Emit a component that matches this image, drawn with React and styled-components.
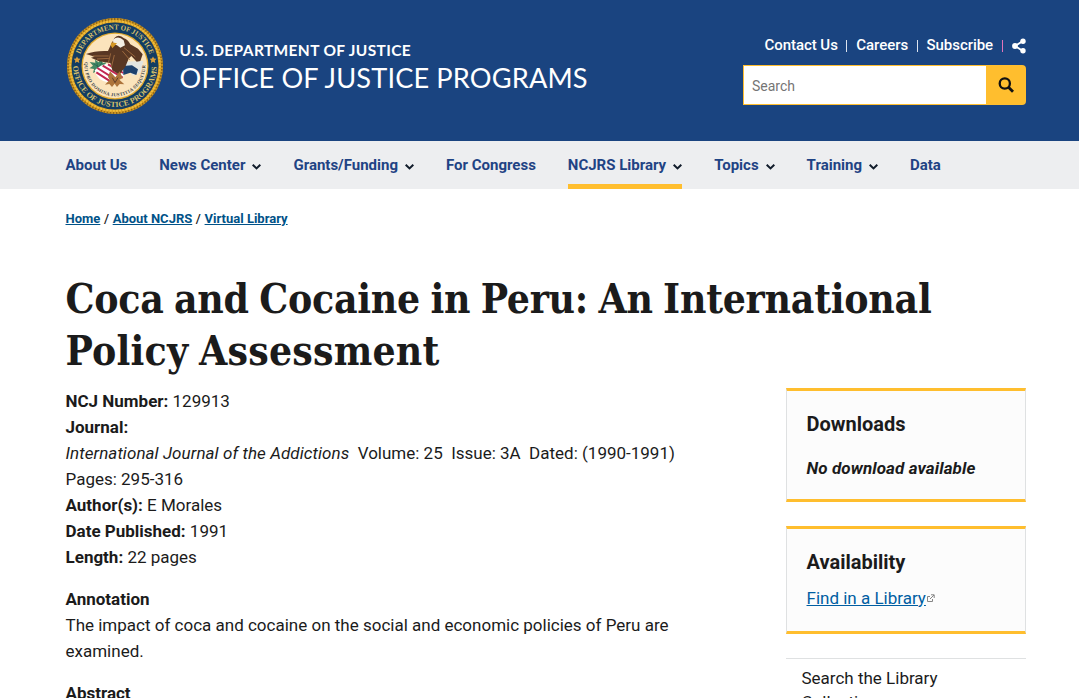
import React from 'react';
import styled, { createGlobalStyle, css } from 'styled-components';

const GlobalStyle = createGlobalStyle`
  * { box-sizing: border-box; }
  html, body { margin: 0; height: 698px; overflow: hidden; background: #fff; }
  body { font-family: Roboto, "Liberation Sans", sans-serif; color: #1b1b1b; }
  h1, h2, p, ul { margin: 0; padding: 0; }
`;

const Container = styled.div`
  width: 960px;
  margin-left: 65.5px;
`;

const Header = styled.header`
  height: 141px;
  background: #1a4480;
`;

const HeaderInner = styled(Container)`
  display: flex;
  justify-content: space-between;
`;

const Brand = styled.div`
  display: flex;
  padding-top: 17px;
  color: #fff;
`;

const Seal = styled.svg`
  width: 98px;
  height: 98px;
  display: block;
`;

const BrandText = styled.div`
  padding: 23px 0 0 16px;
  font-family: Lato, "Liberation Sans", sans-serif;
  white-space: nowrap;
`;

const Department = styled.div`
  font-size: 15.5px;
  font-weight: 700;
  line-height: 20px;
  letter-spacing: 0.36px;
`;

const Office = styled.div`
  font-size: 27.2px;
  line-height: 36px;
  letter-spacing: 0.14px;
`;

const Utility = styled.div`
  width: 283px;
  padding-top: 35px;
`;

const UtilityLinks = styled.div`
  display: flex;
  justify-content: flex-end;
  align-items: center;
  height: 20px;
  color: #fff;
  font-size: 15px;
  font-weight: 500;
  letter-spacing: -0.04px;
  white-space: nowrap;
`;

const Divider = styled.span`
  width: 1px;
  height: 12px;
  margin: 2px 8.8px 0 8.6px;
  background: ${({ $color }) => $color || '#dce4ef'};
`;

const ShareIcon = styled.svg`
  width: 14px;
  height: 16px;
  margin-top: 2px;
`;

const SearchForm = styled.div`
  display: flex;
  height: 40px;
  margin-top: 10px;
`;

const SearchInput = styled.div`
  flex: 1;
  padding-left: 8.5px;
  border: 1px solid #ffbe2e;
  border-right: 0;
  background: #fff;
  color: #757575;
  font-size: 14px;
  line-height: 41px;
`;

const SearchButton = styled.div`
  width: 40px;
  display: flex;
  align-items: center;
  justify-content: center;
  border-radius: 0 4px 4px 0;
  background: #ffbe2e;
`;

const Nav = styled.nav`
  height: 48px;
  background: #edeef0;
`;

const NavList = styled(Container)`
  display: flex;
  gap: 32px;
`;

const NavItem = styled.div`
  display: flex;
  align-items: center;
  height: 48px;
  color: #1f4384;
  font-size: 15px;
  font-weight: 700;
  white-space: nowrap;
  ${({ $active }) => $active && css`box-shadow: inset 0 -5px #ffbe2e;`}
`;

const Chevron = styled.svg`
  width: 9px;
  height: 6px;
  margin: 3px 0 0 7px;
`;

const Breadcrumbs = styled(Container)`
  padding-top: 22px;
  font-size: 13px;
  font-weight: 500;
  line-height: 16px;
  word-spacing: 0.4px;
`;

const CrumbLink = styled.a`
  color: #005288;
  font-weight: 700;
  text-decoration: underline;
  word-spacing: 0;
`;

const Title = styled.h1`
  margin-top: 46px;
  font-family: "DejaVu Serif Condensed", "DejaVu Serif", serif;
  font-stretch: condensed;
  font-size: 40.5px;
  font-weight: 700;
  line-height: 52px;
  white-space: nowrap;
`;

const TitleLine = styled.span`
  display: block;
  letter-spacing: ${({ $spacing }) => $spacing}px;
  word-spacing: -2px;
`;

const Columns = styled(Container)`
  display: flex;
  justify-content: space-between;
  padding-top: 11px;
`;

const Article = styled.article`
  width: 640px;
  font-size: 17px;
  font-weight: 400;
  line-height: 26px;
  white-space: nowrap;
  strong { font-weight: 700; }
  em { letter-spacing: 0.07px; }
`;

const Section = styled.section`
  margin-top: 16px;
`;

const Sidebar = styled.aside`
  width: 240px;
`;

const Card = styled.section`
  height: ${({ $height }) => $height}px;
  margin-bottom: 24px;
  padding: 20px;
  border: 1px solid #dfe1e2;
  border-width: 3px 1px;
  border-top-color: #ffbe2e;
  border-bottom-color: #ffbe2e;
  background: #fcfcfc;
`;

const CardTitle = styled.h2`
  font-size: 20px;
  font-weight: 700;
  line-height: 26px;
`;

const Unavailable = styled.p`
  margin-top: 18px;
  font-size: 17px;
  font-style: italic;
  font-weight: 700;
  line-height: 26px;
  letter-spacing: 0.1px;
`;

const LibraryLink = styled.a`
  display: inline-flex;
  align-items: center;
  margin-top: 10px;
  color: #005ea2;
  font-size: 17px;
  line-height: 26px;
  white-space: nowrap;
  span { text-decoration: underline; }
`;

const SideNav = styled.div`
  padding: 7px 15px 7px 16px;
  border-top: 1px solid #dfe1e2;
  font-size: 17px;
  line-height: 24px;
`;

const navigation = [
  { label: 'About Us' },
  { label: 'News Center', menu: true },
  { label: 'Grants/Funding', menu: true },
  { label: 'For Congress' },
  { label: 'NCJRS Library', menu: true, active: true },
  { label: 'Topics', menu: true },
  { label: 'Training', menu: true },
  { label: 'Data' },
];

function DojSeal() {
  return (
    <Seal viewBox="0 0 98 98" aria-label="Department of Justice seal">
      <defs>
        <path id="sealTop" d="M12.5 49a36.5 36.5 0 0 1 73 0" />
        <path id="sealBottom" d="M7 48a42 42 0 0 0 84 0" />
        <path id="motto" d="M19 44A30.400 30.400 0 1 0 79 44" />
      </defs>
      <circle cx="49" cy="49" r="48" fill="#d39a20" />
      <circle cx="49" cy="49" r="47" fill="none" stroke="#8d651b" strokeWidth="2" strokeDasharray="1.5 1.6" />
      <circle cx="49" cy="49" r="44.800" fill="none" stroke="#f0bd3c" strokeWidth="2" strokeDasharray="2.2 1" />
      <circle cx="49" cy="49" r="43.500" fill="#123c63" />
      <circle cx="49" cy="49" r="33.500" fill="#e0a92e" />
      <circle cx="49" cy="49" r="32.200" fill="#fbe4bc" />
      <g fill="#d7c06c" fontFamily="Liberation Serif, serif" fontWeight="700">
        <text fontSize="7.500"><textPath href="#sealTop" startOffset="12" textLength="91" lengthAdjust="spacingAndGlyphs">DEPARTMENT OF JUSTICE</textPath></text>
        <text fontSize="7.800"><textPath href="#sealBottom" startOffset="1" textLength="129" lengthAdjust="spacingAndGlyphs">OFFICE OF JUSTICE PROGRAMS</textPath></text>
      </g>
      <g fill="#d99d3c">
        <path d="M11 39.500l1.100 2 2.400.2-1.700 1.700.5 2.500-2.300-1.200-2.100 1.200.4-2.500-1.700-1.700 2.300-.2Z" />
        <path d="M87 39.500l1.100 2 2.400.2-1.700 1.700.5 2.500-2.300-1.200-2.100 1.200.4-2.500-1.700-1.700 2.300-.2Z" />
      </g>
      <g transform="scale(.33333) translate(-21 -21)">
        <path d="M92 156l17 2-1-9 11 8 7-10 5 12 11-2-7 13 9 10-15-1-4 12-10-8-13 6 3-12-14-2 11-8Z" fill="#438764" />
        <path d="M104 161l29 20m-19-22l3 25m13-28l-15 22" fill="none" stroke="#205a4b" strokeWidth="2" />
        <path d="M107 181q18-18 38-19l46 7q7 12 2 32-25 16-43 17-36-5-43-37Z" fill="#fff" />
        <path d="M112 187l42 27M115 174l60 38M131 167l60 36M147 163l46 26" stroke="#c12651" strokeWidth="6" />
        <path d="M200 155q31-2 53-2l-8 34-23 10-26-28Z" fill="#e2e5e1" />
        <path d="M192 168l27-2 18 12-5 17-18-7-21 7Z" fill="#1d416d" />
        <path d="M81 132q29-11 66-9l10-22 10-18q13-12 28 2 11 3 19 18l23 13 14 17-7 20-11 2-16-17-8 8-10 24-18 24-21-13-6-22-34-5-24-11 11-3Z" fill="#583723" />
        <path d="M101 138h48m-35 9l37-2m44-32l34 28m-39-18l22 26m-57-19l-7 29m18-24l-9 37" fill="none" stroke="#9a673d" strokeWidth="3" />
        <path d="M162 89q16-14 32 2l4 15-14 7-10-7-11-3Z" fill="#f4efe4" />
        <path d="M158 97l16 3-7 7-7 8-5-9Z" fill="#d49724" />
        <path d="M153 184l16 18 13-18 9 20-10 5 15 14-14-1-8 9-7-10-8 10-8-9-13 2 14-15-5-8Z" fill="#ad743b" />
        <path d="M160 203l8 15 9-15" fill="none" stroke="#603f29" strokeWidth="3" />
      </g>
      <text fill="#343f48" fontFamily="Liberation Serif, serif" fontWeight="700" fontSize="4.700"><textPath href="#motto" startOffset="1" textLength="100">QUI PRO DOMINA JUSTITIA SEQUITUR</textPath></text>
    </Seal>
  );
}

export default function App() {
  return (
    <>
      <GlobalStyle />
      <Header>
        <HeaderInner>
          <Brand>
            <DojSeal />
            <BrandText>
              <Department>U.S. DEPARTMENT OF JUSTICE</Department>
              <Office>OFFICE OF JUSTICE PROGRAMS</Office>
            </BrandText>
          </Brand>
          <Utility>
            <UtilityLinks>
              <span>Contact Us</span><Divider />
              <span>Careers</span><Divider />
              <span>Subscribe</span><Divider $color="#e274ba" />
              <ShareIcon viewBox="0 0 14 16">
                <path d="M11 3L3 8L11 13" fill="none" stroke="#fff" strokeWidth="2" />
                <circle cx="11" cy="3.200" r="2.700" fill="#fff" />
                <circle cx="3" cy="8" r="2.900" fill="#fff" />
                <circle cx="11" cy="12.800" r="2.700" fill="#fff" />
              </ShareIcon>
            </UtilityLinks>
            <SearchForm>
              <SearchInput>Search</SearchInput>
              <SearchButton>
                <svg width="16" height="16" viewBox="0 0 16 16" fill="none" stroke="#111" strokeWidth="2.300">
                  <circle cx="6.800" cy="6.500" r="5.100" />
                  <path d="M10.500 10.300L15 14.800" strokeWidth="2.800" />
                </svg>
              </SearchButton>
            </SearchForm>
          </Utility>
        </HeaderInner>
      </Header>
      <Nav>
        <NavList>
          {navigation.map(({ label, menu, active }) => (
            <NavItem key={label} $active={active}>
              {label}
              {menu && <Chevron viewBox="0 0 9 6"><path d="M.7 .7l3.800 3.700L8.300 .7" fill="none" stroke="#111c2b" strokeWidth="2" /></Chevron>}
            </NavItem>
          ))}
        </NavList>
      </Nav>
      <Breadcrumbs>
        <CrumbLink>Home</CrumbLink> / <CrumbLink>About NCJRS</CrumbLink> / <CrumbLink>Virtual Library</CrumbLink>
      </Breadcrumbs>
      <Container>
        <Title>
          <TitleLine $spacing={-0.26}>Coca and Cocaine in Peru: An International</TitleLine>
          <TitleLine $spacing={0.18}>Policy Assessment</TitleLine>
        </Title>
      </Container>
      <Columns>
        <Article>
          <p><strong>NCJ Number:</strong> 129913</p>
          <p><strong>Journal:</strong></p>
          <p><em>International Journal of the Addictions</em>&nbsp; Volume: 25&nbsp; Issue: 3A&nbsp; Dated: (1990-1991)</p>
          <p>Pages: 295-316</p>
          <p><strong>Author(s):</strong> E Morales</p>
          <p><strong>Date Published:</strong> 1991</p>
          <p><strong>Length:</strong> 22 pages</p>
          <Section>
            <strong>Annotation</strong>
            <p>The impact of coca and cocaine on the social and economic policies of Peru are<br />examined.</p>
          </Section>
          <Section><strong>Abstract</strong></Section>
        </Article>
        <Sidebar>
          <Card $height={114}>
            <CardTitle>Downloads</CardTitle>
            <Unavailable>No download available</Unavailable>
          </Card>
          <Card $height={108}>
            <CardTitle>Availability</CardTitle>
            <LibraryLink>
              <span>Find in a Library</span>
              <svg width="9" height="9" viewBox="0 0 9 9" fill="none" stroke="#858585">
                <path d="M4 2.500H1.500v5h5V5M4 5L8 1M5 .8h3.200V4" />
              </svg>
            </LibraryLink>
          </Card>
          <SideNav>Search the Library<br />Collection</SideNav>
        </Sidebar>
      </Columns>
    </>
  );
}
